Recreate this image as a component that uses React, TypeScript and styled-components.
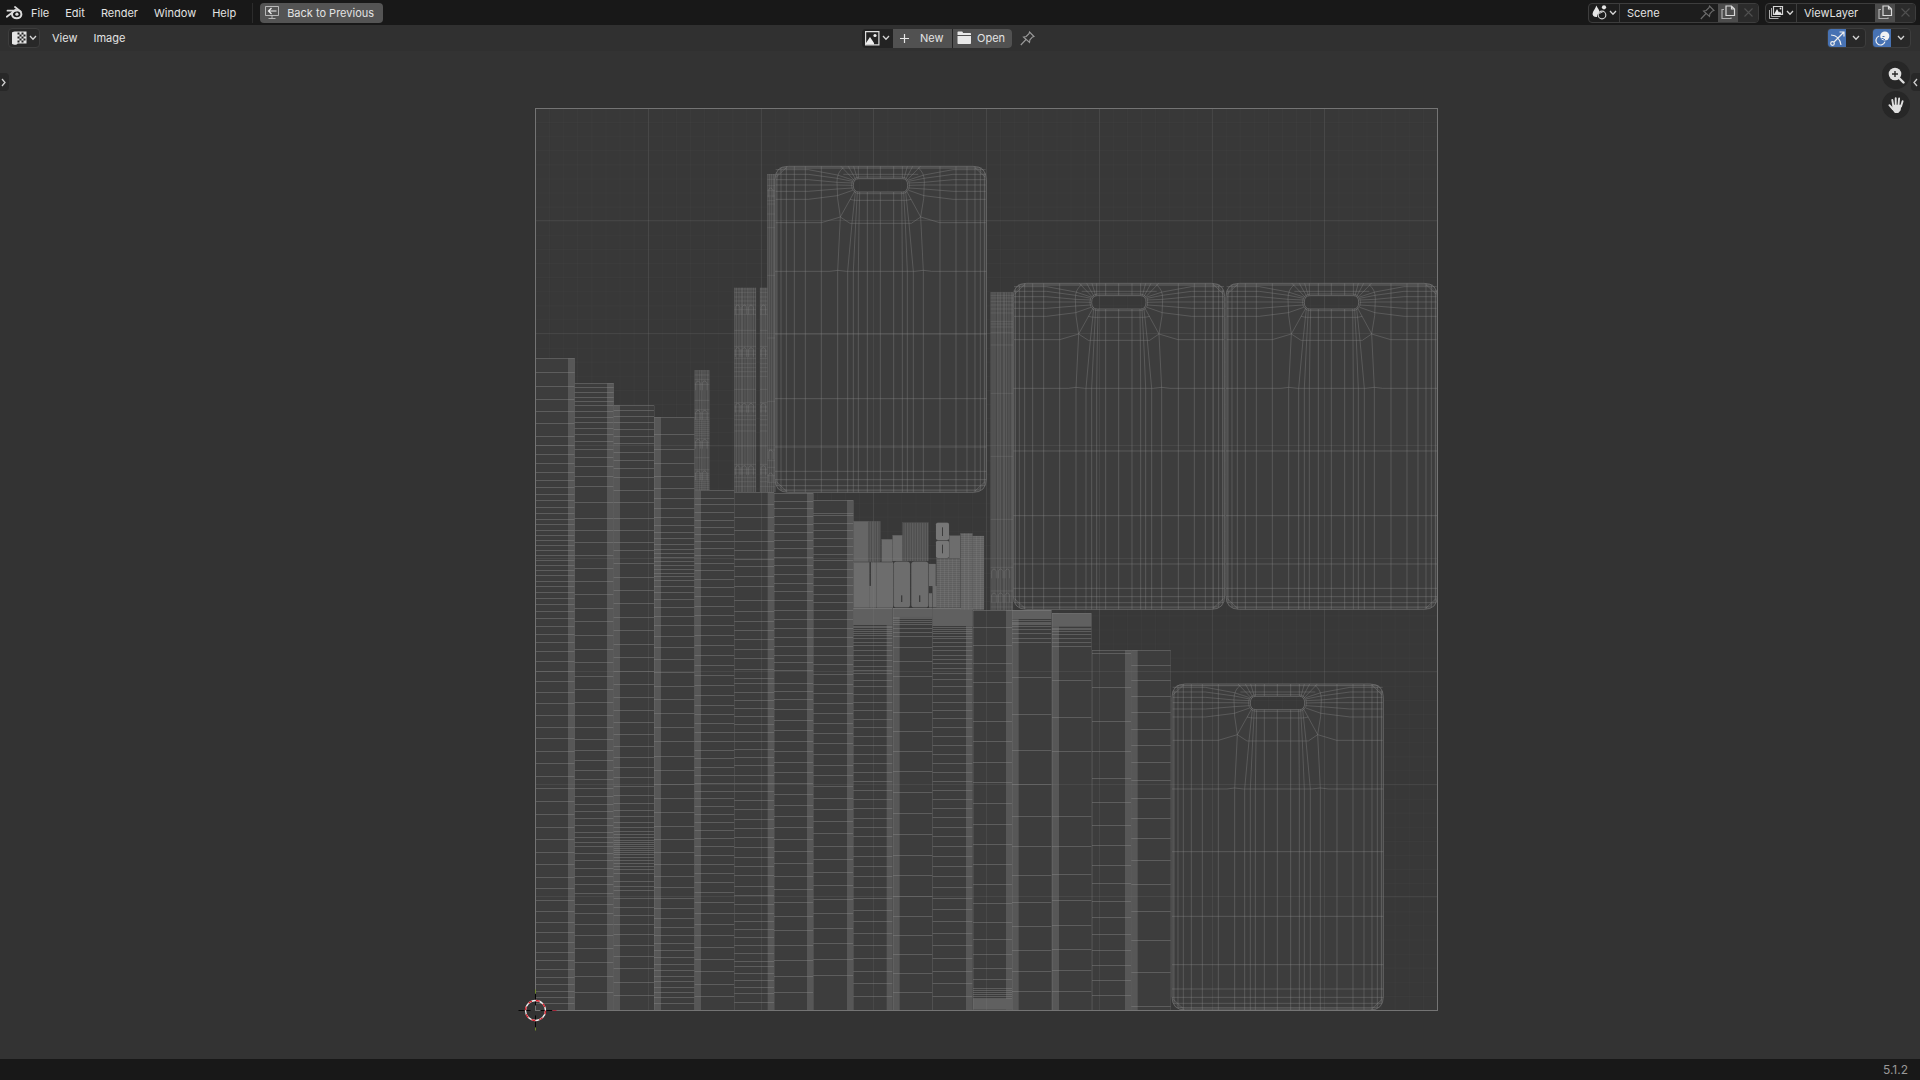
import React from "react";
import styled, { createGlobalStyle } from "styled-components";

const color = {
  bar: "#181818",
  header: "#303030",
  editor: "#333333",
  field: "#1d1d1d",
  outline: "#3d3d3d",
  button: "#545454",
  buttonMuted: "#2b2b2b",
  text: "#e3e3e3",
  accent: "#4772b3",
};

const GlobalStyle = createGlobalStyle`
  *, *::before, *::after { box-sizing: border-box; }
  body { margin: 0; background: ${color.editor}; }
  button, input { font: inherit; color: inherit; }
`;

const Shell = styled.div`
  display: flex;
  flex-direction: column;
  height: 100vh;
  overflow: hidden;
  font-family: Inter, "Noto Sans", sans-serif;
  font-size: 11px;
  line-height: 16px;
  color: ${color.text};
  background: ${color.editor};
`;

const TopBar = styled.header`
  display: flex;
  align-items: center;
  justify-content: space-between;
  flex: none;
  height: 25px;
  padding: 0 4px 0 6px;
  background: ${color.bar};
`;

const Cluster = styled.div<{ $gap?: number }>`
  display: flex;
  align-items: center;
  gap: ${(p) => p.$gap ?? 0}px;
`;

const MenuList = styled.nav<{ $inset: number }>`
  display: flex;
  align-items: center;
  padding-left: ${(p) => p.$inset}px;
`;

const MenuButton = styled.button`
  height: 20px;
  padding: 0 8px;
  border: 0;
  background: none;
  white-space: nowrap;
`;

const Divider = styled.span`
  width: 1px;
  height: 20px;
  margin: 0 7px 0 8px;
  background: #2c2c2c;
`;

const LogoButton = styled.button`
  display: flex;
  padding: 0;
  border: 0;
  background: none;
`;

const BackButton = styled.button`
  display: flex;
  align-items: center;
  gap: 7px;
  height: 20px;
  padding: 0 9px 0 5px;
  border: 0;
  border-radius: 4px;
  background: ${color.button};
  white-space: nowrap;
`;

const DataBlock = styled.div`
  display: flex;
  height: 20px;
  border: 1px solid ${color.outline};
  border-radius: 4px;
  background: ${color.field};
  overflow: hidden;
`;

const PickerButton = styled.button`
  display: flex;
  align-items: center;
  justify-content: center;
  gap: 2px;
  width: 31px;
  height: 100%;
  padding: 0;
  border: 0;
  border-right: 1px solid ${color.outline};
  background: transparent;
`;

const NameField = styled.div<{ $width: number }>`
  display: flex;
  align-items: center;
  width: ${(p) => p.$width}px;
  padding: 0 3px 0 7px;
`;

const NameInput = styled.input`
  flex: 1;
  min-width: 0;
  height: 16px;
  padding: 0;
  border: 0;
  background: none;
  outline: none;
`;

const SquareButton = styled.button<{ $muted?: boolean }>`
  display: flex;
  align-items: center;
  justify-content: center;
  width: 20px;
  padding: 0;
  border: 0;
  background: ${(p) => (p.$muted ? color.buttonMuted : "#4c4c4c")};
`;

const EditorHeader = styled.div`
  display: grid;
  grid-template-columns: 1fr auto 1fr;
  align-items: center;
  flex: none;
  height: 26px;
  padding: 0 9px 0 8px;
  background: ${color.header};
`;

const RightCluster = styled(Cluster)`
  justify-content: flex-end;
`;

const TypeButton = styled.button`
  display: flex;
  align-items: center;
  justify-content: center;
  gap: 2px;
  width: 32px;
  height: 20px;
  padding: 0;
  border: 1px solid ${color.outline};
  border-radius: 4px;
  background: #282828;
`;

const ImageBlock = styled.div`
  display: flex;
  align-items: center;
  height: 19px;
  margin-right: 8px;
  border-radius: 4px;
  background: #232323;
  overflow: hidden;
`;

const ImagePicker = styled.button`
  display: flex;
  align-items: center;
  justify-content: center;
  gap: 2px;
  width: 31px;
  padding: 0;
  border: 0;
  background: none;
`;

const ActionButton = styled.button<{ $gap: number }>`
  display: flex;
  align-items: center;
  gap: ${(p) => p.$gap}px;
  width: 59px;
  height: 19px;
  padding: 0 0 0 4px;
  border: 0;
  background: #515151;

  & + & {
    margin-left: 1px;
  }
`;

const PinButton = styled.button`
  display: flex;
  padding: 0;
  border: 0;
  background: none;
`;

const CenterCluster = styled(Cluster)`
  padding-right: 22px;
`;

const ToggleGroup = styled.div`
  display: flex;
  height: 20px;
  border: 1px solid ${color.outline};
  border-radius: 4px;
  background: #282828;
  overflow: hidden;
`;

const ToggleButton = styled.button<{ $on?: boolean }>`
  display: flex;
  align-items: center;
  justify-content: center;
  width: ${(p) => (p.$on ? 18 : 19)}px;
  padding: 0;
  border: 0;
  background: ${(p) => (p.$on ? color.accent : "transparent")};
`;

const Editor = styled.main`
  position: relative;
  flex: 1;
  min-height: 0;
  background: ${color.editor};
`;

const Canvas = styled.svg`
  display: block;
  width: 100%;
  height: 100%;
`;

const Gizmos = styled.div`
  position: absolute;
  top: 10px;
  right: 10px;
  display: flex;
  flex-direction: column;
  gap: 2px;
`;

const GizmoButton = styled.button`
  display: flex;
  align-items: center;
  justify-content: center;
  width: 28px;
  height: 28px;
  padding: 0;
  border: 0;
  border-radius: 50%;
  background: #272727;
`;

const RegionTab = styled.button<{ $side: "left" | "right" }>`
  position: absolute;
  top: 22px;
  ${(p) => p.$side}: 0;
  display: flex;
  align-items: center;
  justify-content: center;
  width: 9px;
  height: 18px;
  padding: ${(p) => (p.$side === "left" ? "0 2px 0 0" : "0")};
  border: 0;
  border-radius: ${(p) => (p.$side === "left" ? "0 4px 4px 0" : "4px 0 0 4px")};
  background: #282828;
`;

const StatusBar = styled.footer`
  display: flex;
  align-items: center;
  justify-content: flex-end;
  flex: none;
  height: 21px;
  padding: 0 12px;
  background: ${color.bar};
  color: #989898;
  font-size: 12px;
`;

/* ---------- icons ---------- */

const Chevron = () => (
  <svg width="8" height="6" viewBox="0 0 8 6" fill="none" stroke="#d4d4d4" strokeWidth="1.3">
    <path d="M1 1l3 3.2L7 1" />
  </svg>
);

const SideArrow = ({ left }: { left?: boolean }) => (
  <svg width="5" height="9" viewBox="0 0 5 9" fill="none" stroke="#cfcfcf" strokeWidth="1.3">
    <path d={left ? "M4 1L1 4.500l3 3.500" : "M1 1l3 3.500L1 8"} />
  </svg>
);

const BlenderLogo = () => (
  <svg width="17" height="14" viewBox="0 0 17 14" fill="none" stroke="#dcdcdc">
    <ellipse cx="10.700" cy="8.300" rx="4.700" ry="4" strokeWidth="2" />
    <circle cx="10.900" cy="8.200" r="1.600" fill="#dcdcdc" stroke="none" />
    <path d="M9 1l5.800 4.600M1.500 4.700h8.500M.8 10.700L9.600 4" strokeWidth="1.800" strokeLinecap="round" />
  </svg>
);

const BackIcon = () => (
  <svg width="15" height="15" viewBox="0 0 15 15" fill="none" stroke="#d8d8d8">
    <path d="M.5 1.500h13v9H.5zM7 10.500v2.500M3.500 13.500h7" opacity=".75" />
    <path d="M3.500 6h8M6.500 3L3.500 6l3 3" stroke="#f0f0f0" strokeWidth="1.200" />
  </svg>
);

const PinIcon = ({ dim }: { dim?: boolean }) => (
  <svg width="15" height="15" viewBox="0 0 15 15" fill="none" stroke={dim ? "#6b6b6b" : "#999"} strokeWidth="1.100">
    <path d="M9.500 1L14 5.500l-1.500.4-2.600 2.900-.4 2.700L3.500 6l2.700-.5L9 2.600zM6 8.500L.8 14" />
  </svg>
);

const DuplicateIcon = () => (
  <svg width="15" height="15" viewBox="0 0 15 15" fill="none" stroke="#dadada" strokeWidth="1.200">
    <path d="M5 1h5.500L13.500 4v6.500H5zM10.500 1v3h3" />
    <path d="M3 4.500H1v9h9V12.500" opacity=".7" />
  </svg>
);

const CloseIcon = () => (
  <svg width="9" height="9" viewBox="0 0 9 9" stroke="#505050" strokeWidth="1.100">
    <path d="M.5.5l8 8M8.500.5l-8 8" />
  </svg>
);

const SceneIcon = () => (
  <svg width="15" height="15" viewBox="0 0 15 15">
    <path d="M4.300.5C5.500 3 8 5.800 7.600 8A4 4 0 0 0 5 12C2 12.300.3 10.500.6 8.500 1 6 3.500 3.500 4.300.5z" fill="#e6e6e6" />
    <circle cx="12" cy="2.300" r="2.100" fill="#e6e6e6" />
    <circle cx="10" cy="10" r="3.800" fill="none" stroke="#d0d0d0" strokeWidth="1.200" />
    <path d="M7.500 9a2.800 2.800 0 0 1 3-1.800" stroke="#d0d0d0" fill="none" />
  </svg>
);

const LayersIcon = () => (
  <svg width="15" height="15" viewBox="0 0 15 15" fill="none" stroke="#d5d5d5">
    <path d="M4.500 1.500h9v8h-9z" strokeWidth="1.200" />
    <path d="M5 9.500L8 4l2 3.500 1-1 2 3z" fill="#e8e8e8" stroke="none" />
    <circle cx="11.500" cy="3.500" r=".9" fill="#e8e8e8" stroke="none" />
    <path d="M2.500 3v8.500h9M.5 5v8.500h9" opacity=".8" />
  </svg>
);

const UvIcon = () => (
  <svg width="15" height="14" viewBox="0 0 15 14">
    <path d="M0 1.500C1 .5 2 .5 4 .5h10.500v12H6c-1 .3-1 1-2 1.300-1.500.2-3-.3-4-1z" fill="#e6e6e6" />
    <path d="M5.500 1.500h2v2h-2zM9.500 1.500h2v2h-2zM7.500 3.500h2v2h-2zM11.500 3.500h2v2h-2zM5.500 5.500h2v2h-2zM9.500 5.500h2v2h-2zM7.500 7.500h2v2h-2zM11.500 7.500h2v2h-2zM5.500 9.500h2v2h-2zM9.500 9.500h2v2h-2z" fill="#222" />
  </svg>
);

const PictureIcon = () => (
  <svg width="15" height="15" viewBox="0 0 15 15">
    <path d="M.6.6h13.300v13.300H.6z" fill="none" stroke="#dcdcdc" strokeWidth="1.200" />
    <path d="M1 13.500V12L5 6l4 6v1.500z" fill="#eee" />
    <circle cx="10" cy="4.500" r="1.600" fill="#eee" />
  </svg>
);

const PlusIcon = () => (
  <svg width="15" height="15" viewBox="0 0 15 15" stroke="#e6e6e6" strokeWidth="1.200">
    <path d="M7.500 3v9M3 7.500h9" />
  </svg>
);

const FolderIcon = () => (
  <svg width="15" height="14" viewBox="0 0 15 14" fill="#e8e8e8">
    <path d="M.5 1.300Q.5.500 1.300.5h3.900l1 1.500h7Q14 2 14 2.800V4H.500zM.5 5H14v7.200q0 .8-.8.8H1.300q-.8 0-.8-.8z" />
  </svg>
);

const GizmoToggleIcon = () => (
  <svg width="15" height="15" viewBox="0 0 15 15" fill="none" stroke="#f0f0f0" strokeWidth="1.200">
    <circle cx="2.500" cy="12.500" r="1.800" />
    <path d="M4 11L14 1M9.500 1H14v4.500M1 4c5 .3 9 4 10 10" />
  </svg>
);

const OverlayIcon = () => (
  <svg width="15" height="15" viewBox="0 0 15 15">
    <circle cx="9.800" cy="5" r="4.600" fill="#f2f2f2" />
    <path d="M4.200 5A4.600 4.600 0 1 0 10 10.700" fill="none" stroke="#f2f2f2" strokeWidth="1.200" />
    <path d="M6.500 7.500h2M7.500 5.500h2M8.500 8.500h1.500" stroke={color.accent} />
  </svg>
);

const ZoomIcon = () => (
  <svg width="17" height="17" viewBox="0 0 17 17">
    <circle cx="7" cy="7" r="6.300" fill="#e0e0e0" />
    <path d="M11.500 11.500l4 4" stroke="#e0e0e0" strokeWidth="2.400" strokeLinecap="round" />
    <path d="M7 4v6M4 7h6" stroke="#2a2a2a" strokeWidth="1.400" />
  </svg>
);

const HandIcon = () => (
  <svg width="17" height="17" viewBox="0 0 17 17" fill="none" stroke="#e0e0e0" strokeLinecap="round" strokeLinejoin="round">
    <path d="M5.300 9L4.300 3M7.700 8V1.200M10.500 8l.6-6.500M13 9.500l1.600-5.300M4.800 12L1.400 8.200" strokeWidth="1.900" />
    <path d="M5.500 8.500h7l-.6 4.500-2 2.300H7.300L4.800 12z" fill="#e0e0e0" strokeWidth="1.600" />
  </svg>
);

/* ---------- UV layout: mesh units, three to the pixel ---------- */

const from = (base: number, ...offsets: number[]) => offsets.map((v) => base + v);
const snap = (v: number) => Math.floor(v / 3) * 3 + 1.5;
const range = (n: number) => Array.from({ length: n }, (_, i) => i);

const UV = { x: 1606.5, y: 325.5, size: 2706 };
const FLOOR = UV.y + UV.size;

type Column = {
  left: number;
  right: number;
  top: number;
  seam?: [number, number];
  solid?: [number, number];
  rungs: number[];
};

const columns: Column[] = [
  {
    left: 1606, right: 1724, top: 1075, seam: [1704, 1724],
    rungs: [
      ...from(1020, 97, 139, 179, 214, 251, 289, 317, 344, 370, 398, 421, 442, 463, 482, 501, 520, 539, 554, 570, 586, 600, 616, 631, 645, 660, 676, 691, 706, 724, 740, 758, 776, 794, 814, 835, 858, 884, 907, 934, 964, 995),
      ...from(2040, 4, 38, 71, 106, 142, 175, 214, 251, 290, 325, 364, 403, 442, 479, 518, 554, 592, 626, 661, 694, 727, 757, 787, 817, 840, 867, 892, 913, 935, 952, 971),
    ],
  },
  {
    left: 1724, right: 1841, top: 1150, seam: [1821, 1841],
    rungs: [
      ...from(1020, 142, 157, 172, 184, 197, 214, 232, 246, 264, 282, 304, 328, 352, 379, 409, 439, 487, 535, 571, 607, 647, 685, 724, 763, 805, 844, 886, 928, 967, 1010),
      ...from(2040, 28, 68, 106, 142, 178, 212, 241, 271, 298, 326, 349, 373, 394, 415, 436, 457, 473, 486, 500, 520, 541, 565, 589, 613, 640, 673, 700, 733, 766, 805, 847, 890, 938),
    ],
  },
  {
    left: 1841, right: 1962, top: 1216, seam: [1841, 1860],
    rungs: [
      ...from(1020, 212, 230, 247, 267, 290, 310, 337, 361, 386, 411, 450, 487, 535, 571, 607, 631, 670, 712, 751, 790, 832, 871, 913, 952, 994),
      ...from(2040, 13, 53, 92, 127, 164, 200, 232, 262, 292, 319, 346, 370, 392, 410, 428, 442, 454, 463, 473, 481, 487, 493, 499, 505, 511, 517, 523, 531, 541, 550, 559, 569, 580, 604, 619, 631, 655, 682, 706, 733, 763, 797, 829, 865, 907, 947),
    ],
  },
  {
    left: 1962, right: 2084, top: 1252, seam: [1962, 1983],
    rungs: [
      ...from(1020, 283, 328, 370, 409, 445, 475, 506, 532, 556, 577, 595, 613, 627, 640, 653, 665, 677, 689, 700, 710, 722, 740, 757, 778, 802, 829, 857, 889, 922, 958, 997),
      ...from(2040, 20, 58, 101, 142, 185, 230, 271, 314, 355, 397, 439, 479, 518, 554, 590, 622, 655, 685, 715, 743, 767, 790, 811, 832, 853, 872, 889, 905, 922, 937, 952, 971),
    ],
  },
  {
    left: 2084, right: 2203, top: 1471, seam: [2084, 2103],
    rungs: [
      ...from(1020, 475, 493, 517, 541, 562, 583, 604, 625, 646, 670, 691, 718, 742, 769, 799, 826, 857, 886, 916, 946, 976, 1006),
      ...from(2040, 16, 46, 76, 104, 130, 157, 185, 212, 235, 262, 286, 310, 334, 355, 379, 403, 428, 451, 475, 499, 526, 553, 580, 607, 637, 667, 700, 733, 767, 802, 838, 874, 913, 950),
    ],
  },
  {
    left: 2203, right: 2322, top: 1477, seam: [2303, 2322],
    rungs: [
      ...from(1020, 493, 532, 571, 604, 631, 658, 679, 709, 739, 781, 814, 844, 871, 898, 928, 956, 988, 1016),
      ...from(2040, 10, 38, 61, 86, 109, 133, 157, 184, 208, 232, 257, 286, 310, 334, 361, 388, 418, 446, 472, 502, 532, 559, 587, 619, 647, 673, 700, 724, 748, 772, 796, 820, 844, 860, 880, 902, 922, 940, 967),
    ],
  },
  {
    left: 2322, right: 2440, top: 1480, seam: [2421, 2440],
    rungs: [
      ...from(1020, 484, 505, 529, 553, 577, 600, 625, 652, 676, 703, 730, 754, 782, 811, 838, 865, 892, 919, 946, 967, 991),
      ...from(2040, 10, 34, 58, 88, 122, 151, 185, 215, 247, 278, 310, 343, 377, 409, 443, 479, 514, 550, 589, 628, 667, 709, 751, 796, 841, 889, 938),
    ],
  },
  {
    left: 2440, right: 2560, top: 1501, seam: [2541, 2560],
    rungs: [
      ...from(1020, 520, 526, 550, 572, 595, 619, 643, 661, 688, 712, 736, 763, 787, 811, 838, 865, 892, 919, 946, 973, 1003),
      ...from(2040, 13, 40, 70, 101, 130, 160, 190, 223, 256, 286, 319, 355, 388, 424, 460, 499, 538, 577, 616, 659, 700, 745, 790, 838, 886),
    ],
  },
  {
    left: 2560, right: 2677, top: 1824, seam: [2660, 2677], solid: [1824, 1875],
    rungs: from(1800, 78, 83, 88, 95, 101, 107, 115, 128, 137, 151, 166, 181, 199, 212, 221, 241, 259, 283, 307, 331, 358, 382, 409, 436, 463, 490, 517, 544, 571, 598, 625, 656, 682, 710, 740, 769, 799, 829, 862, 895, 931, 964, 1000, 1037, 1076, 1114, 1150, 1189),
  },
  {
    left: 2679, right: 2797, top: 1824, seam: [2679, 2699], solid: [1824, 1851],
    rungs: from(1800, 53, 56, 62, 68, 74, 84, 96, 109, 142, 184, 230, 283, 337, 394, 454, 514, 577, 640, 703, 767, 826, 889, 949, 1006, 1063, 1120, 1177),
  },
  {
    left: 2798, right: 2917, top: 1824, seam: [2898, 2917], solid: [1824, 1878],
    rungs: from(1800, 82, 88, 94, 101, 108, 116, 127, 138, 151, 166, 178, 190, 205, 221, 238, 259, 283, 307, 331, 355, 382, 409, 436, 463, 490, 517, 544, 571, 598, 625, 652, 682, 710, 740, 769, 799, 829, 862, 895, 928, 964, 1000, 1037, 1076, 1114, 1150, 1189),
  },
  {
    left: 2919, right: 3036, top: 1830, seam: [3018, 3036], solid: [2997, 3029],
    rungs: from(1800, 82, 136, 190, 247, 307, 364, 424, 487, 547, 610, 673, 734, 794, 853, 910, 967, 1018, 1063, 1105, 1138, 1165, 1172, 1178, 1184, 1189, 1194),
  },
  {
    left: 3036, right: 3154, top: 1830, seam: [3036, 3056], solid: [1830, 1857],
    rungs: from(1800, 62, 66, 70, 74, 80, 88, 99, 115, 128, 232, 343, 451, 553, 649, 740, 826, 908, 979, 1051, 1114, 1174),
  },
  {
    left: 3156, right: 3274, top: 1840, seam: [3156, 3177], solid: [1840, 1880],
    rungs: from(1800, 84, 88, 93, 103, 115, 127, 139, 241, 352, 454, 649, 740, 824, 901, 976, 1048, 1111, 1174),
  },
  {
    left: 3276, right: 3394, top: 1951, seam: [3375, 3394],
    rungs: from(1800, 159, 262, 364, 454, 535, 607, 676, 736, 796, 850, 904, 952, 1003, 1051, 1096, 1141, 1186),
  },
  {
    left: 3394, right: 3512, top: 1951, seam: [3394, 3413],
    rungs: from(1800, 196, 241, 290, 338, 388, 436, 487, 541, 595, 655, 716, 781, 853, 934, 1021, 1117, 1219),
  },
];

const ColumnIsland = ({ left, right, top, seam, solid, rungs }: Column) => (
  <g>
    <rect x={left} y={top} width={right - left} height={FLOOR - top} fill="#3d3d3d" />
    {seam && <rect x={seam[0]} y={top} width={seam[1] - seam[0]} height={FLOOR - top} fill="#575757" />}
    {solid && <rect x={left} y={solid[0]} width={right - left} height={solid[1] - solid[0]} fill="#606060" />}
    <path
      d={[top, ...rungs].map((y) => `M${left} ${snap(y)}H${right}`).join("")}
      stroke="#8c8c8c"
      strokeOpacity=".42"
      strokeWidth="3"
    />
    <path d={`M${snap(left)} ${top}V${FLOOR}M${snap(right)} ${top}V${FLOOR}`} stroke="#8c8c8c" strokeOpacity=".2" strokeWidth="3" />
  </g>
);

type Strip = { x: number; y: number; w: number; h: number; lines: number[]; rungs: number[]; loops: number[] };

const bandRungs = [4, 14, 28, 40, 52, 66, 80, 128, 176, 190, 200, 212, 228, 240, 252, 266, 305, 345, 358, 370, 384, 396, 412, 430, 475, 530, 545, 556, 570, 582, 596];

const strips: Strip[] = [
  { x: 2084, y: 1111, w: 44, h: 360, lines: [1, 7, 14, 20, 25, 31, 38, 43], rungs: [1, 14, 27, 42, 90, 118, 130, 142, 148, 154, 160, 166, 172, 178, 184, 190, 196, 204, 216, 225, 262, 298, 310, 316, 322, 328, 334, 340, 346, 352, 358], loops: [30, 118, 205, 300] },
  { x: 2203, y: 863, w: 65, h: 613, lines: [1, 6, 14, 21, 25, 32, 39, 44, 50, 57, 64], rungs: bandRungs, loops: [50, 178, 345, 532] },
  { x: 2280, y: 863, w: 24, h: 613, lines: [1, 6, 12, 17, 22], rungs: bandRungs, loops: [50, 178, 345, 532] },
  { x: 2302, y: 522, w: 24, h: 954, lines: [1, 6, 12, 18, 23], rungs: [2, 16, 34, 50, 66, 80, 90, 120, 161, 304, 492, 682, 828, 860, 880, 905, 925, 938], loops: [40, 826, 895] },
  { x: 2972, y: 877, w: 67, h: 953, lines: [1, 7, 13, 21, 25, 30, 38, 42, 48, 55, 62, 66], rungs: [1, 9, 17, 27, 38, 50, 62, 87, 95, 104, 120, 158, 303, 492, 681, 825, 896, 912, 930, 944], loops: [828, 900] },
];

const StripIsland = ({ x, y, w, h, lines, rungs, loops }: Strip) => (
  <g transform={`translate(${x} ${y})`} fill="none" stroke="#8c8c8c" strokeWidth="3">
    <rect width={w} height={h} fill="#484848" stroke="none" />
    <path d={lines.map((v) => `M${v} 0V${h}`).join("")} strokeOpacity=".3" />
    <path d={rungs.map((v) => `M0 ${v}H${w}`).join("")} strokeOpacity=".24" />
    <path
      d={loops
        .flatMap((v) => range(Math.floor(w / 20)).map((i) => `M${3 + i * 20} ${v + 30}v-22q7 -12 14 0v22`))
        .join("")}
      strokeOpacity=".3"
    />
  </g>
);

const sideLines = [6, 18, 34, 58, 91, 139];
const fan: [number, number][] = [[218, 241], [235, 247], [250, 254], [277, 277], [316, 316], [356, 356], [382, 380], [397, 386], [415, 392]];
const rows = [503, 697, 842, 915, 940, 958, 971];
const spokes: [number, number, number][] = [[10, 26, 41], [24, 36, 45], [40, 48, 50], [56, 56, 57], [75, 68, 65], [99, 88, 72]];

const inset = (v: number, edge: number) => (v < edge ? Math.round(edge - Math.sqrt(edge * edge - (edge - v) * (edge - v))) : 0);

const sidePath = sideLines
  .map((v) => {
    const cut = inset(v, 40);
    return `M${v} ${cut}V${978 - cut}M${634 - v} ${cut}V${978 - cut}`;
  })
  .join("");

const fanPath = fan.map(([low, high]) => `M${high} 77L${Math.round(high + (low - high) * 0.45)} 171L${low} 315V978`).join("");

const rowPath = rows
  .map((v) => {
    const cut = inset(978 - v, 40);
    return `M${cut} ${v}H${634 - cut}`;
  })
  .join("");

const spokePath = spokes
  .map(
    ([outer, mid, slot]) =>
      `M2 ${outer}H100L187 ${mid}L233 ${slot}M632 ${outer}H534L447 ${mid}L401 ${slot}`,
  )
  .join("");

const crownPath = [
  "M198 0L238 42M220 0L242 39M236 0L247 37M250 0V36M277 0V36M316 0V36M356 0V36M382 0V36M397 0L387 37M413 0L392 39M436 0L396 42",
  "M205 4Q186 18 186 46L188 97L196 152L188 315V978M429 4Q448 18 448 46L446 97L437 152L445 315V978",
  "M2 169H139L196 152L225 171H409L437 152L494 169H632",
  "M196 152L240 73M437 152L394 73",
  "M225 99Q235 102 245 102H389Q399 102 409 99",
  "M0 315H165L188 312L214 315H420L445 312L470 315H634",
  "M205 24H430M14 5H620",
].join("");

const Board = ({ x, y }: { x: number; y: number }) => (
  <g transform={`translate(${x} ${y})`} fill="none" stroke="#8c8c8c" strokeWidth="3" strokeOpacity=".37">
    <path
      d="M40 0H594Q634 0 634 40V938Q634 978 594 978H40Q0 978 0 938V40Q0 0 40 0ZM252 37Q235 37 235 57Q235 77 252 77H382Q398 77 398 57Q398 37 382 37Z"
      fill="#3d3d3d"
      fillRule="evenodd"
      strokeOpacity=".5"
    />
    <rect x="5" y="5" width="624" height="968" rx="34" strokeOpacity=".2" />
    <path d={sidePath} />
    <path d={fanPath} />
    <path d={rowPath} />
    <path d={spokePath} />
    <path d={crownPath} />
    <rect x="230" y="32" width="173" height="50" rx="23" />
    <path d="M4 32L34 4M600 4L630 32M4 946L34 974M600 974L630 946" />
  </g>
);

const boards = [
  { x: 2325, y: 499 },
  { x: 3040, y: 850 },
  { x: 3678, y: 850 },
  { x: 3516, y: 2052 },
];

type Chip = { x: number; y: number; w: number; h: number; r?: number; tone?: string; pattern?: string };

/* Small packed islands; their origin sits at (2520, 1470). */
const chips: Chip[] = [
  { x: 41, y: 94, w: 44, h: 121, tone: "#666666" },
  { x: 85, y: 94, w: 36, h: 121, tone: "#5e5e5e", pattern: "url(#stripes)" },
  { x: 125, y: 148, w: 32, h: 67 },
  { x: 158, y: 136, w: 29, h: 77 },
  { x: 188, y: 98, w: 77, h: 115, tone: "#5e5e5e", pattern: "url(#stripes)" },
  { x: 288, y: 98, w: 39, h: 52, r: 5, tone: "#777777" },
  { x: 288, y: 152, w: 39, h: 52, r: 5, tone: "#777777" },
  { x: 328, y: 137, w: 32, h: 67 },
  { x: 362, y: 130, w: 35, h: 229, tone: "#626262", pattern: "url(#mesh)" },
  { x: 398, y: 138, w: 34, h: 221, tone: "#626262", pattern: "url(#mesh)" },
  { x: 290, y: 206, w: 70, h: 147, tone: "#5f5f5f", pattern: "url(#mesh)" },
  { x: 41, y: 217, w: 47, h: 136 },
  { x: 88, y: 288, w: 6, h: 65 },
  { x: 93, y: 217, w: 17, h: 136 },
  { x: 111, y: 217, w: 48, h: 136 },
  { x: 161, y: 215, w: 49, h: 137, r: 8 },
  { x: 214, y: 215, w: 51, h: 137, r: 8 },
  { x: 267, y: 222, w: 20, h: 66 },
  { x: 267, y: 310, w: 9, h: 42 },
  { x: 278, y: 288, w: 12, h: 64 },
];

const slits: Chip[] = [
  { x: 183, y: 316, w: 4, h: 20 },
  { x: 237, y: 316, w: 4, h: 20 },
  { x: 306, y: 112, w: 3, h: 26 },
  { x: 306, y: 164, w: 3, h: 26 },
];

const UvLayout = () => (
  <Canvas viewBox="0 51 1920 1008" role="img" aria-label="UV layout">
    <defs>
      <pattern id="stripes" width="15" height="12" patternUnits="userSpaceOnUse">
        <path d="M4 0V12M12 0V12" stroke="#303030" strokeWidth="3" strokeOpacity=".45" />
      </pattern>
      <pattern id="mesh" width="12" height="6" patternUnits="userSpaceOnUse">
        <path d="M0 1.500H12M1.500 0V6" stroke="#8c8c8c" strokeWidth="2" strokeOpacity=".3" />
      </pattern>
    </defs>
    <g transform="scale(.3333333)">
      <rect x={UV.x} y={UV.y} width={UV.size} height={UV.size} fill="#383838" />
      <path
        d={range(63).map((i) => {
          const v = ((i + 1) * UV.size) / 64;
          return `M${UV.x + v} ${UV.y}V${FLOOR}M${UV.x} ${UV.y + v}H${UV.x + UV.size}`;
        }).join("")}
        stroke="#8c8c8c"
        strokeOpacity=".055"
        strokeWidth="3"
      />
      {columns.map((c) => <ColumnIsland key={c.left} {...c} />)}
      {strips.map((s) => <StripIsland key={s.x} {...s} />)}
      {boards.map((b) => <Board key={`${b.x}-${b.y}`} {...b} />)}
      <g transform="translate(2520 1470)">
        {chips.map((c) => (
          <g key={`${c.x}-${c.y}`}>
            <rect x={c.x} y={c.y} width={c.w} height={c.h} rx={c.r} fill={c.tone ?? "#6d6d6d"} stroke="#7d7d7d" strokeOpacity=".4" />
            {c.pattern && <rect x={c.x} y={c.y} width={c.w} height={c.h} fill={c.pattern} />}
          </g>
        ))}
        {slits.map((c) => <rect key={`${c.x}-${c.y}`} x={c.x} y={c.y} width={c.w} height={c.h} fill="#3c3c3c" />)}
      </g>
      <path
        d={range(7).map((i) => {
          const v = ((i + 1) * UV.size) / 8;
          return `M${snap(UV.x + v)} ${UV.y}V${FLOOR}M${UV.x} ${snap(UV.y + v - 3)}H${UV.x + UV.size}`;
        }).join("")}
        stroke="#8c8c8c"
        strokeOpacity=".16"
        strokeWidth="3"
      />
      <rect x={UV.x} y={UV.y} width={UV.size} height={UV.size} fill="none" stroke="#747474" strokeWidth="3" />
    </g>
    <g transform="translate(535.5 1010.5)" fill="none">
      <path d="M-17 0H-5M5 0H17M0 -17V-5M0 5V17" stroke="#050505" />
      <path d="M17 0H21" stroke="#a8283c" />
      <path d="M0 -21V-17M0 17V20" stroke="#6f8a2a" />
      <circle r="10" stroke="#f0f0f0" strokeWidth="1.300" />
      <circle r="10" stroke="#d8202c" strokeWidth="1.300" strokeDasharray="3.927" />
    </g>
  </Canvas>
);

/* ---------- page ---------- */

type DataBlockPickerProps = { id: string; label: string; value: string; width: number; icon: React.ReactNode; pinned?: boolean };

const DataBlockPicker = ({ id, label, value, width, icon, pinned }: DataBlockPickerProps) => (
  <DataBlock>
    <PickerButton aria-label={`Browse ${label}`}>
      {icon}
      <Chevron />
    </PickerButton>
    <NameField $width={width}>
      <NameInput id={id} aria-label={label} defaultValue={value} />
      {pinned && (
        <PinButton aria-label={`Pin ${label}`}>
          <PinIcon dim />
        </PinButton>
      )}
    </NameField>
    <SquareButton aria-label={`New ${label}`}>
      <DuplicateIcon />
    </SquareButton>
    <SquareButton $muted aria-label={`Remove ${label}`}>
      <CloseIcon />
    </SquareButton>
  </DataBlock>
);

export default function App() {
  return (
    <Shell>
      <GlobalStyle />
      <TopBar>
        <Cluster>
          <LogoButton aria-label="Blender">
            <BlenderLogo />
          </LogoButton>
          <MenuList $inset={0}>
            {["File", "Edit", "Render", "Window", "Help"].map((name) => (
              <MenuButton key={name}>{name}</MenuButton>
            ))}
          </MenuList>
          <Divider />
          <BackButton>
            <BackIcon />
            Back to Previous
          </BackButton>
        </Cluster>
        <Cluster $gap={6}>
          <DataBlockPicker id="scene" label="Scene" value="Scene" width={98} icon={<SceneIcon />} pinned />
          <DataBlockPicker id="view-layer" label="View layer" value="ViewLayer" width={78} icon={<LayersIcon />} />
        </Cluster>
      </TopBar>
      <EditorHeader>
        <Cluster>
          <TypeButton aria-label="Editor type">
            <UvIcon />
            <Chevron />
          </TypeButton>
          <MenuList $inset={4}>
            <MenuButton>View</MenuButton>
            <MenuButton>Image</MenuButton>
          </MenuList>
        </Cluster>
        <CenterCluster>
          <ImageBlock>
            <ImagePicker aria-label="Browse image">
              <PictureIcon />
              <Chevron />
            </ImagePicker>
            <ActionButton $gap={8}>
              <PlusIcon />
              New
            </ActionButton>
            <ActionButton $gap={5}>
              <FolderIcon />
              Open
            </ActionButton>
          </ImageBlock>
          <PinButton aria-label="Pin image">
            <PinIcon />
          </PinButton>
        </CenterCluster>
        <RightCluster $gap={6}>
          <ToggleGroup>
            <ToggleButton $on aria-pressed="true" aria-label="Show gizmos">
              <GizmoToggleIcon />
            </ToggleButton>
            <ToggleButton aria-label="Gizmo options">
              <Chevron />
            </ToggleButton>
          </ToggleGroup>
          <ToggleGroup>
            <ToggleButton $on aria-pressed="true" aria-label="Show overlays">
              <OverlayIcon />
            </ToggleButton>
            <ToggleButton aria-label="Overlay options">
              <Chevron />
            </ToggleButton>
          </ToggleGroup>
        </RightCluster>
      </EditorHeader>
      <Editor>
        <UvLayout />
        <RegionTab $side="left" aria-label="Show toolbar">
          <SideArrow />
        </RegionTab>
        <RegionTab $side="right" aria-label="Show sidebar">
          <SideArrow left />
        </RegionTab>
        <Gizmos>
          <GizmoButton aria-label="Zoom view">
            <ZoomIcon />
          </GizmoButton>
          <GizmoButton aria-label="Pan view">
            <HandIcon />
          </GizmoButton>
        </Gizmos>
      </Editor>
      <StatusBar>5.1.2</StatusBar>
    </Shell>
  );
}
